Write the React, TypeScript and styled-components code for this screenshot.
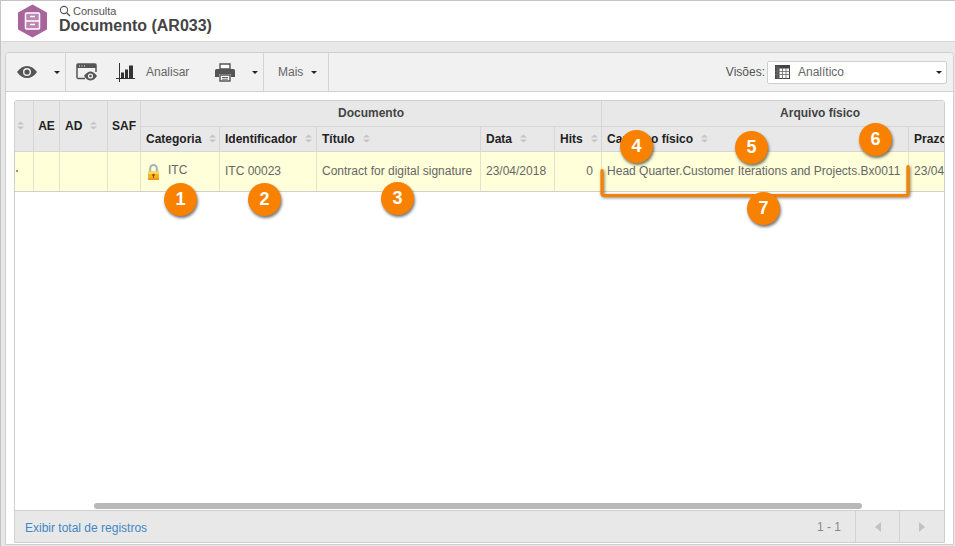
import { FC } from "react";
import styled, { createGlobalStyle } from "styled-components";

const GlobalStyle = createGlobalStyle`
    html, body {
        margin: 0;
        padding: 0;
        width: 955px;
        height: 546px;
        overflow: hidden;
        background: #e8e8e8;
        font-family: "Liberation Sans", Arial, sans-serif;
        font-size: 12px;
        color: #555;
    }
`;

const Page = styled.div`
    width: 955px;
    height: 546px;
    box-sizing: border-box;
    border-left: 1px solid #c4c4c4;
    border-top: 1px solid #c4c4c4;
    display: flex;
    flex-direction: column;
    position: relative;
`;

const Header = styled.header`
    height: 40px;
    background: #fff;
    border-bottom: 1px solid #d8d8d8;
    display: flex;
    align-items: center;
    padding-left: 16px;
    gap: 11px;
    flex-shrink: 0;
`;

const HeaderText = styled.div`
    display: flex;
    flex-direction: column;
    margin-top: -2px;
`;

const Crumb = styled.div`
    display: flex;
    align-items: center;
    gap: 2px;
    font-size: 11px;
    line-height: 11px;
    color: #555;
`;

const Title = styled.h1`
    margin: 0;
    font-size: 16px;
    line-height: 18px;
    font-weight: bold;
    color: #444;
`;

const Panel = styled.section`
    margin: 10px 1px 0 4px;
    height: 493px;
    box-sizing: border-box;
    border: 1px solid #cfcfcf;
    border-radius: 4px 4px 0 0;
    background: #fff;
    display: flex;
    flex-direction: column;
`;

const Toolbar = styled.div`
    height: 38px;
    flex-shrink: 0;
    background: #f1f1f1;
    border-bottom: 1px solid #cfcfcf;
    border-radius: 4px 4px 0 0;
    display: flex;
    align-items: stretch;
`;

const ToolGroup = styled.div<{ $width: number; $inset: number }>`
    width: ${({ $width }) => $width}px;
    padding-left: ${({ $inset }) => $inset}px;
    box-sizing: border-box;
    border-right: 1px solid #d4d4d4;
    display: flex;
    align-items: center;
`;

const ToolIcon = styled.span<{ $gap: number }>`
    display: flex;
    margin-left: ${({ $gap }) => $gap}px;
`;

const Caret = styled.span<{ $gap: number }>`
    width: 0;
    height: 0;
    margin-left: ${({ $gap }) => $gap}px;
    border-left: 3px solid transparent;
    border-right: 3px solid transparent;
    border-top: 3px solid #222;
`;

const ToolLabel = styled.span<{ $gap: number }>`
    margin-left: ${({ $gap }) => $gap}px;
    font-size: 12px;
    color: #666;
`;

const ViewPicker = styled.div`
    margin-left: auto;
    margin-right: 6px;
    display: flex;
    align-items: center;
    gap: 2px;
    color: #555;
`;

const Select = styled.div`
    width: 180px;
    height: 23px;
    box-sizing: border-box;
    background: #fff;
    border: 1px solid #cfcfcf;
    border-radius: 2px;
    display: flex;
    align-items: center;
    padding: 0 4px 0 7px;
    color: #666;
    gap: 8px;
`;

const SelectCaret = styled(Caret)`
    margin-left: auto;
`;

const Content = styled.div`
    flex: 1;
    padding: 8px 8px 1px 8px;
    background: #fff;
    display: flex;
    min-height: 0;
`;

const Grid = styled.div`
    width: 931px;
    box-sizing: border-box;
    border: 1px solid #cfcfcf;
    border-radius: 3px 3px 0 0;
    display: flex;
    flex-direction: column;
    position: relative;
    overflow: hidden;
`;

const TableArea = styled.div`
    flex: 1;
    overflow: hidden;
    min-height: 0;
`;

const Table = styled.table`
    border-collapse: collapse;
    table-layout: fixed;
    width: 1024px;
    margin: -1px 0 0 -1px;
`;

const GroupCell = styled.th`
    height: 25px;
    padding: 0;
    background: #e8e8e8;
    border: 1px solid #d6d6d6;
    border-top: 0;
    font-size: 12px;
    font-weight: bold;
    color: #444;
    text-align: center;
`;

const HeadCell = styled.th<{ $align?: "left" | "center" | "right"; $flush?: boolean }>`
    height: 24px;
    padding: ${({ $flush }) => ($flush ? "0" : "0 4px 0 5px")};
    background: #e8e8e8;
    border: 1px solid #d6d6d6;
    font-size: 12px;
    font-weight: bold;
    color: #222;
    text-align: ${({ $align }) => $align || "left"};
    white-space: nowrap;
    overflow: hidden;
`;

const HeadInner = styled.span`
    display: inline-flex;
    align-items: center;
    gap: 7px;
`;

const ClippedSort = styled.span`
    display: flex;
    justify-content: flex-end;
    padding-right: 8px;
`;

const Cell = styled.td<{ $right?: boolean }>`
    height: 39px;
    padding: ${({ $right }) => ($right ? "0 8px 0 5px" : "0 5px")};
    background: #ffffd9;
    border: 1px solid #e2e2d0;
    border-bottom: 1px solid #cfcfcf;
    font-size: 12px;
    color: #666;
    text-align: ${({ $right }) => ($right ? "right" : "left")};
    white-space: nowrap;
    overflow: hidden;
`;

const RowMark = styled.span`
    display: block;
    width: 2px;
    height: 2px;
    margin-left: -4px;
    background: #7da56c;
`;

const CategoryCell = styled.span`
    display: flex;
    align-items: center;
    gap: 7px;
`;

const CategoryName = styled.span`
    margin-top: -3px;
`;

const ScrollThumb = styled.div`
    position: absolute;
    left: 79px;
    top: 402px;
    width: 768px;
    height: 6px;
    border-radius: 3px;
    background: #b8b8b8;
`;

const Footer = styled.footer`
    height: 31px;
    flex-shrink: 0;
    background: #e8e8e8;
    border-top: 1px solid #cfcfcf;
    display: flex;
    align-items: stretch;
`;

const FooterLink = styled.a`
    color: #3f87c5;
    font-size: 12px;
    align-self: center;
    margin: 2px auto 0 10px;
`;

const Range = styled.span`
    align-self: center;
    color: #888;
    margin: 1px 14px 0 0;
`;

const PagerButton = styled.div<{ $width: number }>`
    width: ${({ $width }) => $width}px;
    box-sizing: border-box;
    border-left: 1px solid #d2d2d2;
    display: flex;
    align-items: center;
    justify-content: center;
`;

const Arrow = styled.span<{ $dir: "left" | "right" }>`
    width: 0;
    height: 0;
    border-top: 5px solid transparent;
    border-bottom: 5px solid transparent;
    ${({ $dir }) =>
        $dir === "left"
            ? "border-right: 6px solid #c2c2c2;"
            : "border-left: 6px solid #c2c2c2;"}
`;

const Badge = styled.div<{ $x: number; $y: number }>`
    position: absolute;
    left: ${({ $x }) => $x}px;
    top: ${({ $y }) => $y}px;
    width: 33px;
    height: 33px;
    border-radius: 50%;
    background: #f98100;
    box-shadow: 1px 2px 3px rgba(0, 0, 0, 0.55);
    color: #fff;
    font-size: 18px;
    font-weight: bold;
    display: flex;
    align-items: center;
    justify-content: center;
`;

const BracketMark = styled.svg`
    position: absolute;
    left: 589px;
    top: 159px;
    filter: drop-shadow(1px 1px 1.5px rgba(0, 0, 0, 0.5));
`;

const SortIcon: FC = () => (
    <svg width="9" height="9" viewBox="0 0 9 9">
        <path d="M4.5 0.5 L8 3.5 H1 Z M4.5 8.5 L8 5.5 H1 Z" fill="#c4c4c4" />
    </svg>
);

const HexLogo: FC = () => (
    <svg width="31" height="34" viewBox="0 0 31 34">
        <path
            d="M15.5 1.5 L29 9 V25 L15.5 32.5 L2 25 V9 Z"
            fill="#a9649d"
            stroke="#a9649d"
            strokeWidth="2"
            strokeLinejoin="round"
        />
        <rect x="8.5" y="9" width="14" height="16" rx="1" fill="#bd86b2" stroke="#fff" strokeWidth="1.5" />
        <path d="M8.5 17 H22.5" stroke="#fff" strokeWidth="1.5" />
        <path d="M13 12.5 H18 M13 20.5 H18" stroke="#fff" strokeWidth="1.3" />
    </svg>
);

const SearchIcon: FC = () => (
    <svg width="12" height="12" viewBox="0 0 12 12">
        <circle cx="5" cy="5" r="3.6" fill="none" stroke="#555" strokeWidth="1.1" />
        <path d="M7.7 7.7 L11 11" stroke="#555" strokeWidth="1.3" />
    </svg>
);

const EyeIcon: FC = () => (
    <svg width="20" height="12" viewBox="0 0 20 12">
        <path
            fillRule="evenodd"
            d="M0 6 C3 2 6 0 10 0 C14 0 17 2 20 6 C17 10 14 12 10 12 C6 12 3 10 0 6 Z M10 2 A4 4 0 1 0 10 10 A4 4 0 1 0 10 2 Z"
            fill="#555"
        />
        <circle cx="10" cy="6" r="2.6" fill="#555" />
    </svg>
);

const WindowEyeIcon: FC = () => (
    <svg width="21" height="18" viewBox="0 0 21 18">
        <path d="M9 15.5 H2 A1.2 1.2 0 0 1 1 14.5 V2 A1 1 0 0 1 2 1 H19 A1 1 0 0 1 20 2 V9" fill="none" stroke="#555" strokeWidth="1.5" />
        <rect x="1" y="1" width="19" height="4" fill="#555" />
        <path d="M3 3 H4 M5.5 3 H6.5 M8 3 H9" stroke="#f1f1f1" strokeWidth="1" />
        <path d="M8 13 C10 10 12.5 8.5 14.5 8.5 C16.5 8.5 19 10 21 13 C19 16 16.5 17.5 14.5 17.5 C12.5 17.5 10 16 8 13 Z" fill="#555" />
        <circle cx="14.5" cy="13" r="2.6" fill="#f1f1f1" />
        <circle cx="14.5" cy="13" r="1.3" fill="#555" />
    </svg>
);

const ChartIcon: FC = () => (
    <svg width="21" height="19" viewBox="0 0 21 19">
        <path d="M3.5 0 V19 M0 15.5 H19" stroke="#333" strokeWidth="1" />
        <path d="M5 9.5 H8 V15 H5 Z M9 6.5 H12 V15 H9 Z M13 2.5 H17 V15 H13 Z" fill="#333" />
    </svg>
);

const PrinterIcon: FC = () => (
    <svg width="20" height="19" viewBox="0 0 20 19">
        <path d="M5 1 H15 V6 H5 Z" fill="#fff" stroke="#555" strokeWidth="1.4" />
        <path d="M1.5 6 H18.5 A1.5 1.5 0 0 1 20 7.5 V14 H16 V11 H4 V14 H0 V7.5 A1.5 1.5 0 0 1 1.5 6 Z" fill="#555" />
        <path d="M5 12 H15 V18 H5 Z" fill="#fff" stroke="#555" strokeWidth="1.4" />
        <path d="M7 14.5 H13 M7 16.2 H13" stroke="#555" strokeWidth="0.9" />
    </svg>
);

const GridIcon: FC = () => (
    <svg width="15" height="14" viewBox="0 0 15 14">
        <rect x="0.5" y="0.5" width="14" height="13" fill="#fff" stroke="#444" />
        <rect x="0.5" y="0.5" width="14" height="3" fill="#444" />
        <rect x="0.5" y="0.5" width="4" height="13" fill="#555" />
        <path d="M0 6.5 H15 M0 9.5 H15 M7.5 3 V14 M11 3 V14 M2.5 3 V14" stroke="#666" strokeWidth="0.8" />
    </svg>
);

const LockIcon: FC = () => (
    <svg width="15" height="17" viewBox="0 0 15 17">
        <path d="M4.2 9 V5.5 A3.3 3.6 0 0 1 10.8 5.5 V9" fill="none" stroke="#9db4c0" strokeWidth="2" />
        <rect x="2" y="8.5" width="11" height="8.5" rx="1" fill="#f7b51d" />
        <rect x="2" y="8.5" width="11" height="2.5" fill="#fcd75a" />
        <rect x="2" y="15" width="11" height="2" fill="#ec9a12" />
        <circle cx="7.5" cy="12" r="1.2" fill="#8a3f10" />
        <path d="M7.5 12 V15" stroke="#8a3f10" strokeWidth="1" />
    </svg>
);

// the last column runs on past the visible edge of the grid, the area clips it
const widths = [19, 26, 48, 33, 79, 97, 164, 74, 47, 307, 130];

const columns = ["Categoria", "Identificador", "Título", "Data", "Hits", "Caminho físico"];

// left and top of each numbered callout, relative to the page frame
const badges: [number, number, number][] = [
    [1, 163, 182],
    [2, 247, 182],
    [3, 380, 181],
    [4, 619, 129],
    [5, 734, 130],
    [6, 858, 122],
    [7, 746, 191],
];

const App: FC = () => {
    return (
        <Page>
            <GlobalStyle />
            <Header>
                <HexLogo />
                <HeaderText>
                    <Crumb>
                        <SearchIcon />
                        Consulta
                    </Crumb>
                    <Title>Documento (AR033)</Title>
                </HeaderText>
            </Header>
            <Panel>
                <Toolbar>
                    <ToolGroup $width={60} $inset={11}>
                        <EyeIcon />
                        <Caret $gap={17} />
                    </ToolGroup>
                    <ToolGroup $width={198} $inset={10}>
                        <WindowEyeIcon />
                        <ToolIcon $gap={19}>
                            <ChartIcon />
                        </ToolIcon>
                        <ToolLabel $gap={9}>Analisar</ToolLabel>
                        <ToolIcon $gap={26}>
                            <PrinterIcon />
                        </ToolIcon>
                        <Caret $gap={17} />
                    </ToolGroup>
                    <ToolGroup $width={65} $inset={14}>
                        <ToolLabel $gap={0}>Mais</ToolLabel>
                        <Caret $gap={8} />
                    </ToolGroup>
                    <ViewPicker>
                        Visões:
                        <Select>
                            <GridIcon />
                            Analítico
                            <SelectCaret $gap={0} />
                        </Select>
                    </ViewPicker>
                </Toolbar>
                <Content>
                    <Grid>
                        <TableArea>
                            <Table>
                                <colgroup>
                                    {widths.map((w, i) => (
                                        <col key={i} style={{ width: w }} />
                                    ))}
                                </colgroup>
                                <thead>
                                    <tr>
                                        <HeadCell rowSpan={2} $flush>
                                            <ClippedSort>
                                                <SortIcon />
                                            </ClippedSort>
                                        </HeadCell>
                                        <HeadCell rowSpan={2} $flush $align="center">
                                            AE
                                        </HeadCell>
                                        <HeadCell rowSpan={2}>
                                            <HeadInner>
                                                AD
                                                <SortIcon />
                                            </HeadInner>
                                        </HeadCell>
                                        <HeadCell rowSpan={2} $flush $align="center">
                                            SAF
                                        </HeadCell>
                                        <GroupCell colSpan={5}>Documento</GroupCell>
                                        <GroupCell colSpan={2}>Arquivo físico</GroupCell>
                                    </tr>
                                    <tr>
                                        {columns.map((label) => (
                                            <HeadCell key={label}>
                                                <HeadInner>
                                                    {label}
                                                    <SortIcon />
                                                </HeadInner>
                                            </HeadCell>
                                        ))}
                                        <HeadCell>Prazo</HeadCell>
                                    </tr>
                                </thead>
                                <tbody>
                                    <tr>
                                        <Cell>
                                            <RowMark />
                                        </Cell>
                                        <Cell />
                                        <Cell />
                                        <Cell />
                                        <Cell>
                                            <CategoryCell>
                                                <LockIcon />
                                                <CategoryName>ITC</CategoryName>
                                            </CategoryCell>
                                        </Cell>
                                        <Cell>ITC 00023</Cell>
                                        <Cell>Contract for digital signature</Cell>
                                        <Cell>23/04/2018</Cell>
                                        <Cell $right>0</Cell>
                                        <Cell>Head Quarter.Customer Iterations and Projects.Bx0011</Cell>
                                        <Cell>23/04/2018</Cell>
                                    </tr>
                                </tbody>
                            </Table>
                        </TableArea>
                        <ScrollThumb />
                        <Footer>
                            <FooterLink>Exibir total de registros</FooterLink>
                            <Range>1 - 1</Range>
                            <PagerButton $width={44}>
                                <Arrow $dir="left" />
                            </PagerButton>
                            <PagerButton $width={45}>
                                <Arrow $dir="right" />
                            </PagerButton>
                        </Footer>
                    </Grid>
                </Content>
            </Panel>
            <BracketMark width="330" height="45" viewBox="0 0 330 45">
                <path
                    d="M12 10.5 V33.5 Q12 35.5 14 35.5 H316 Q318 35.5 318 33.5 V6.5"
                    fill="none"
                    stroke="#f98100"
                    strokeWidth="3.2"
                    strokeLinecap="round"
                />
            </BracketMark>
            {badges.map(([n, x, y]) => (
                <Badge key={n} $x={x} $y={y}>
                    {n}
                </Badge>
            ))}
        </Page>
    );
};

export default App;
